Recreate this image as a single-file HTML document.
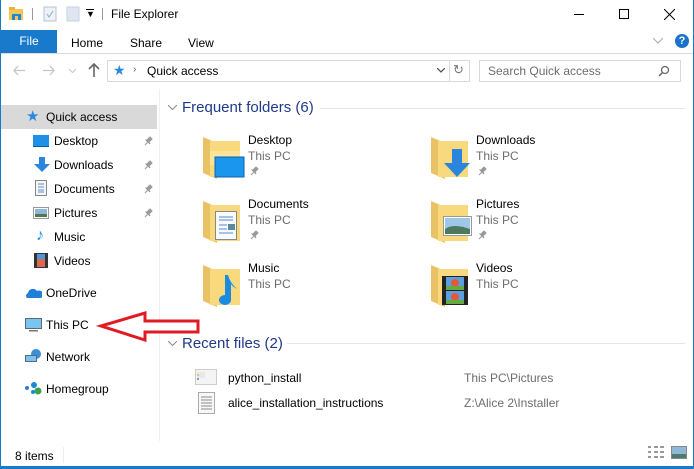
<!DOCTYPE html>
<html><head><meta charset="utf-8"><style>
*{margin:0;padding:0;box-sizing:border-box}
body{width:694px;height:469px;overflow:hidden;background:#fff;font-family:"Liberation Sans",sans-serif;font-size:12px;color:#000;position:relative}
.a{position:absolute;white-space:nowrap}
.g{color:#6d6d6d}
.h{color:#1e3a8a;font-size:15px}
.pin{position:absolute;width:10px;height:10px}
</style></head><body>
<!-- window border -->
<div class="a" style="left:0;top:0;width:1px;height:467px;background:#1979ca"></div>
<div class="a" style="left:693px;top:0;width:1px;height:467px;background:#1979ca"></div>
<div class="a" style="left:0;top:466px;width:694px;height:3px;background:#1979ca"></div>

<!-- title bar -->
<svg class="a" style="left:8px;top:6px" width="16" height="16"><rect x="1" y="3" width="14" height="11" fill="#f3c855"/><rect x="1" y="1" width="6" height="3" fill="#e8b53a"/><rect x="4" y="8" width="9" height="6" fill="#1e88d6"/><rect x="7" y="10" width="3" height="4" fill="#f3c855"/></svg>
<div class="a" style="left:32px;top:8px;width:1px;height:12px;background:#999"></div>
<svg class="a" style="left:43px;top:6px" width="14" height="16"><rect x="1" y="1" width="12" height="14" fill="#eef2f8" stroke="#b7c3d6"/><path d="M4 8l2 3 4-6" stroke="#9ab" fill="none"/></svg>
<svg class="a" style="left:66px;top:6px" width="14" height="16"><rect x="1" y="1" width="12" height="14" fill="#dfe6f2" stroke="#c7d1e2"/></svg>
<div class="a" style="left:86px;top:9px;font-size:9px">&#9660;</div>
<div class="a" style="left:86px;top:9px;width:8px;height:1px;background:#000"></div>
<div class="a" style="left:102px;top:8px;width:1px;height:12px;background:#999"></div>
<div class="a" style="left:111px;top:7px;font-size:12px">File Explorer</div>
<div class="a" style="left:574px;top:14px;width:10px;height:1px;background:#000"></div>
<div class="a" style="left:619px;top:9px;width:10px;height:10px;border:1px solid #000"></div>
<svg class="a" style="left:664px;top:9px" width="11" height="11"><path d="M0 0L11 11M11 0L0 11" stroke="#000"/></svg>

<!-- ribbon tabs -->
<div class="a" style="left:1px;top:30px;width:56px;height:23px;background:#1979ca;color:#fff;text-align:center;line-height:23px">File</div>
<div class="a" style="left:71px;top:36px">Home</div>
<div class="a" style="left:130px;top:36px">Share</div>
<div class="a" style="left:188px;top:36px">View</div>
<svg class="a" style="left:653px;top:38px" width="10" height="6"><path d="M0 0l5 5 5-5" stroke="#aaa" fill="none"/></svg>
<div class="a" style="left:675px;top:34px;width:14px;height:14px;border-radius:50%;background:#1a73c9;color:#fff;font-weight:bold;font-size:11px;text-align:center;line-height:14px">?</div>
<div class="a" style="left:1px;top:53px;width:692px;height:1px;background:#dadbdc"></div>

<!-- nav buttons -->
<svg class="a" style="left:13px;top:65px" width="12" height="11"><path d="M12 5.5H1M5 1L1 5.5 5 10" stroke="#c5c5c5" fill="none" stroke-width="1.3"/></svg>
<svg class="a" style="left:43px;top:65px" width="12" height="11"><path d="M0 5.5h11M7 1l4 4.5L7 10" stroke="#c5c5c5" fill="none" stroke-width="1.3"/></svg>
<svg class="a" style="left:69px;top:69px" width="7" height="4"><path d="M0 0l3.5 3.5L7 0" stroke="#c5c5c5" fill="none"/></svg>
<svg class="a" style="left:88px;top:63px" width="12" height="14"><path d="M6 14V1M1 6l5-5 5 5" stroke="#666" fill="none" stroke-width="1.6"/></svg>
<div class="a" style="left:107px;top:60px;width:363px;height:22px;border:1px solid #d9d9d9"></div>
<div class="a" style="left:449px;top:61px;width:1px;height:20px;background:#d9d9d9"></div>
<div class="a" style="left:113px;top:62px;color:#2a88e0;font-size:14px">&#9733;</div>
<div class="a" style="left:133px;top:64px;font-size:10px;color:#555">&#8250;</div>
<div class="a" style="left:147px;top:64px">Quick access</div>
<svg class="a" style="left:437px;top:68px" width="8" height="5"><path d="M0 0l4 4 4-4" stroke="#555" fill="none" stroke-width="1.3"/></svg>
<div class="a" style="left:453px;top:62px;font-size:13px;color:#777">&#8635;</div>
<div class="a" style="left:479px;top:60px;width:202px;height:22px;border:1px solid #d9d9d9"></div>
<div class="a" style="left:488px;top:64px;color:#6d6d6d">Search Quick access</div>
<svg class="a" style="left:658px;top:65px" width="12" height="12"><circle cx="7" cy="5" r="3.5" stroke="#666" fill="none" stroke-width="1.3"/><path d="M4.5 7.5L1 11" stroke="#666" stroke-width="1.5"/></svg>

<!-- nav pane -->
<div class="a" style="left:159px;top:89px;width:1px;height:352px;background:#f0f0f0"></div>
<div class="a" style="left:1px;top:105px;width:156px;height:24px;background:#d9d9d9"></div>
<div class="a" style="left:26px;top:107px;color:#2a88e0;font-size:15px">&#9733;</div>
<div class="a" style="left:46px;top:110px">Quick access</div>

<div class="a" style="left:33px;top:135px;width:16px;height:12px;background:#1e90e8;border-bottom:1px solid #0a5ca8"></div>
<div class="a" style="left:54px;top:134px">Desktop</div>
<svg class="a" style="left:34px;top:157px" width="16" height="16"><path d="M5 0h6v7h5L8 15 0 7h5z" fill="#2a86dd"/></svg>
<div class="a" style="left:54px;top:158px">Downloads</div>
<svg class="a" style="left:35px;top:180px" width="12" height="16"><rect x=".5" y=".5" width="11" height="15" fill="#f5f5f5" stroke="#888"/><path d="M3 4h6M3 7h6M3 10h6M3 12h6" stroke="#5a8fd0"/></svg>
<div class="a" style="left:54px;top:182px">Documents</div>
<svg class="a" style="left:33px;top:207px" width="16" height="12"><rect x=".5" y=".5" width="15" height="11" fill="#fff" stroke="#999"/><rect x="2" y="2" width="12" height="8" fill="#8fb8d8"/><rect x="2" y="7" width="12" height="3" fill="#4f7a4f"/></svg>
<div class="a" style="left:54px;top:206px">Pictures</div>
<div class="a" style="left:36px;top:227px;color:#1a8ce0;font-size:16px">&#9834;</div>
<div class="a" style="left:54px;top:230px">Music</div>
<svg class="a" style="left:34px;top:253px" width="14" height="15"><rect width="14" height="15" fill="#333"/><rect x="3" y="1" width="8" height="13" fill="#d65"/><rect x="3" y="1" width="8" height="5" fill="#4a9ad8"/></svg>
<div class="a" style="left:54px;top:254px">Videos</div>
<svg class="pin" style="left:143px;top:136px"><path d="M2 9l3-3M4 4l3-3 2 2-3 3 1 2-4-4z" stroke="#999" fill="#999"/></svg>
<svg class="pin" style="left:143px;top:160px"><path d="M2 9l3-3M4 4l3-3 2 2-3 3 1 2-4-4z" stroke="#999" fill="#999"/></svg>
<svg class="pin" style="left:143px;top:184px"><path d="M2 9l3-3M4 4l3-3 2 2-3 3 1 2-4-4z" stroke="#999" fill="#999"/></svg>
<svg class="pin" style="left:143px;top:208px"><path d="M2 9l3-3M4 4l3-3 2 2-3 3 1 2-4-4z" stroke="#999" fill="#999"/></svg>

<svg class="a" style="left:25px;top:288px" width="17" height="10"><path d="M2 10a3 3 0 0 1 1-5 5 5 0 0 1 9-2 3.5 3.5 0 0 1 4 7z" fill="#1e7fd6"/></svg>
<div class="a" style="left:46px;top:286px">OneDrive</div>
<svg class="a" style="left:25px;top:318px" width="17" height="14"><rect x=".5" y=".5" width="16" height="10" fill="#7cc4f0" stroke="#5a6a7a"/><rect x="4" y="12" width="9" height="1.5" fill="#777"/></svg>
<div class="a" style="left:46px;top:318px">This PC</div>
<svg class="a" style="left:25px;top:349px" width="17" height="15"><circle cx="11" cy="5" r="5" fill="#3b8fd9"/><rect x=".5" y="6.5" width="11" height="6" fill="#7cc4f0" stroke="#5a6a7a"/></svg>
<div class="a" style="left:46px;top:350px">Network</div>
<svg class="a" style="left:25px;top:381px" width="17" height="14"><circle cx="2" cy="7" r="2" fill="#2d7bc9"/><circle cx="9" cy="4" r="3" fill="#1e88d6"/><circle cx="13" cy="10" r="3.5" fill="#3aa34a"/><circle cx="8" cy="11" r="2" fill="#1e88d6"/></svg>
<div class="a" style="left:46px;top:382px">Homegroup</div>

<!-- red arrow -->
<svg class="a" style="left:96px;top:308px" width="106" height="34"><path d="M5 18L49 5v8h53v11H49v8z" fill="#fff" stroke="#e01b24" stroke-width="3" stroke-linejoin="miter"/></svg>

<!-- status -->
<div class="a" style="left:15px;top:449px">8 items</div>
<div class="a" style="left:63px;top:447px;width:1px;height:16px;background:#eee"></div>
<svg class="a" style="left:648px;top:446px" width="17" height="13"><path d="M0 1h3M0 6h3M0 11h3M6 1h4M12 1h4M6 6h4M12 6h4M6 11h4M12 11h4" stroke="#777" stroke-width="1.5"/></svg>
<svg class="a" style="left:671px;top:446px" width="16" height="13"><rect x=".5" y=".5" width="15" height="12" fill="#8fb8d8" stroke="#888"/><rect x="1" y="8" width="14" height="4" fill="#4f7a6f"/></svg>

<!-- content -->
<svg class="a" style="left:168px;top:105px" width="9" height="6"><path d="M0 0l4.5 4.5L9 0" stroke="#888" fill="none"/></svg>
<div class="a h" style="left:182px;top:99px">Frequent folders (6)</div>
<div class="a" style="left:320px;top:108px;width:365px;height:1px;background:#e5e5e5"></div>

<!-- folder template positions -->
<svg class="a" style="left:202px;top:135px" width="44" height="44"><path d="M1 2l14 6v36L1 38z" fill="#e8c265"/><rect x="8" y="6" width="30" height="36" fill="#f8d97e"/><rect x="8" y="16" width="30" height="14" fill="#fbe49a"/><rect x="13" y="22" width="29" height="20" fill="#1a96ee" stroke="#0a64b0"/></svg>
<div class="a" style="left:248px;top:133px">Desktop</div><div class="a g" style="left:248px;top:149px">This PC</div>
<svg class="pin" style="left:249px;top:166px"><path d="M2 9l3-3M4 4l3-3 2 2-3 3 1 2-4-4z" stroke="#999" fill="#999"/></svg>

<svg class="a" style="left:430px;top:135px" width="44" height="44"><path d="M1 2l14 6v36L1 38z" fill="#e8c265"/><rect x="8" y="6" width="30" height="36" fill="#f8d97e"/><path d="M22 14h10v14h8L27 42 14 28h8z" fill="#2a86dd"/></svg>
<div class="a" style="left:476px;top:133px">Downloads</div><div class="a g" style="left:476px;top:149px">This PC</div>
<svg class="pin" style="left:477px;top:166px"><path d="M2 9l3-3M4 4l3-3 2 2-3 3 1 2-4-4z" stroke="#999" fill="#999"/></svg>

<svg class="a" style="left:202px;top:199px" width="44" height="44"><path d="M1 2l14 6v36L1 38z" fill="#e8c265"/><rect x="8" y="6" width="30" height="36" fill="#f8d97e"/><rect x="13.5" y="12.5" width="21" height="28" fill="#fafafa" stroke="#888"/><path d="M17 18h14M17 21h14M17 26h8M17 30h8M17 34h14" stroke="#4a8fd6"/><rect x="26" y="25" width="7" height="6" fill="#5a8aa0"/></svg>
<div class="a" style="left:248px;top:197px">Documents</div><div class="a g" style="left:248px;top:213px">This PC</div>
<svg class="pin" style="left:249px;top:230px"><path d="M2 9l3-3M4 4l3-3 2 2-3 3 1 2-4-4z" stroke="#999" fill="#999"/></svg>

<svg class="a" style="left:430px;top:199px" width="44" height="44"><path d="M1 2l14 6v36L1 38z" fill="#e8c265"/><rect x="8" y="6" width="30" height="36" fill="#f8d97e"/><rect x="13.5" y="17.5" width="28" height="19" fill="#fff" stroke="#999"/><rect x="15" y="19" width="25" height="16" fill="#9fc8e8"/><path d="M15 30q8-6 25 0v5H15z" fill="#4d7a5f"/></svg>
<div class="a" style="left:476px;top:197px">Pictures</div><div class="a g" style="left:476px;top:213px">This PC</div>
<svg class="pin" style="left:477px;top:230px"><path d="M2 9l3-3M4 4l3-3 2 2-3 3 1 2-4-4z" stroke="#999" fill="#999"/></svg>

<svg class="a" style="left:202px;top:263px" width="44" height="44"><path d="M1 2l14 6v36L1 38z" fill="#e8c265"/><rect x="8" y="6" width="30" height="36" fill="#f8d97e"/><path d="M23 12h3q2 8 9 14-4-2-6-5v16a6 5 0 1 1-6-5z" fill="#1a8ce0"/></svg>
<div class="a" style="left:248px;top:261px">Music</div><div class="a g" style="left:248px;top:277px">This PC</div>

<svg class="a" style="left:430px;top:263px" width="44" height="44"><path d="M1 2l14 6v36L1 38z" fill="#e8c265"/><rect x="8" y="6" width="30" height="36" fill="#f8d97e"/><rect x="12" y="13" width="26" height="29" fill="#222"/><rect x="16" y="14" width="18" height="13" fill="#5aa0e0"/><rect x="16" y="28" width="18" height="13" fill="#5aa0e0"/><circle cx="25" cy="20" r="4" fill="#e05a3a"/><circle cx="25" cy="34" r="4" fill="#e05a3a"/><rect x="16" y="23" width="18" height="4" fill="#6a4"/><rect x="16" y="37" width="18" height="4" fill="#6a4"/></svg>
<div class="a" style="left:476px;top:261px">Videos</div><div class="a g" style="left:476px;top:277px">This PC</div>

<svg class="a" style="left:168px;top:341px" width="9" height="6"><path d="M0 0l4.5 4.5L9 0" stroke="#888" fill="none"/></svg>
<div class="a h" style="left:182px;top:335px">Recent files (2)</div>
<div class="a" style="left:287px;top:343px;width:398px;height:1px;background:#e5e5e5"></div>

<svg class="a" style="left:195px;top:369px" width="22" height="16"><rect x=".5" y=".5" width="21" height="15" fill="#f4f4f4" stroke="#ccc"/><rect x="2" y="3" width="8" height="6" fill="#e8e8e8"/><circle cx="3" cy="6" r="1" fill="#e8b53a"/><circle cx="3" cy="10" r="1" fill="#3a8ad8"/></svg>
<div class="a" style="left:228px;top:371px">python_install</div>
<div class="a g" style="left:464px;top:371px">This PC\Pictures</div>
<svg class="a" style="left:198px;top:392px" width="17" height="22"><rect x=".5" y=".5" width="16" height="21" fill="#f8f8f8" stroke="#aaa"/><path d="M3 5h11M3 8h11M3 11h11M3 14h11M3 17h11" stroke="#888"/></svg>
<div class="a" style="left:228px;top:396px">alice_installation_instructions</div>
<div class="a g" style="left:464px;top:396px">Z:\Alice 2\Installer</div>
</body></html>
